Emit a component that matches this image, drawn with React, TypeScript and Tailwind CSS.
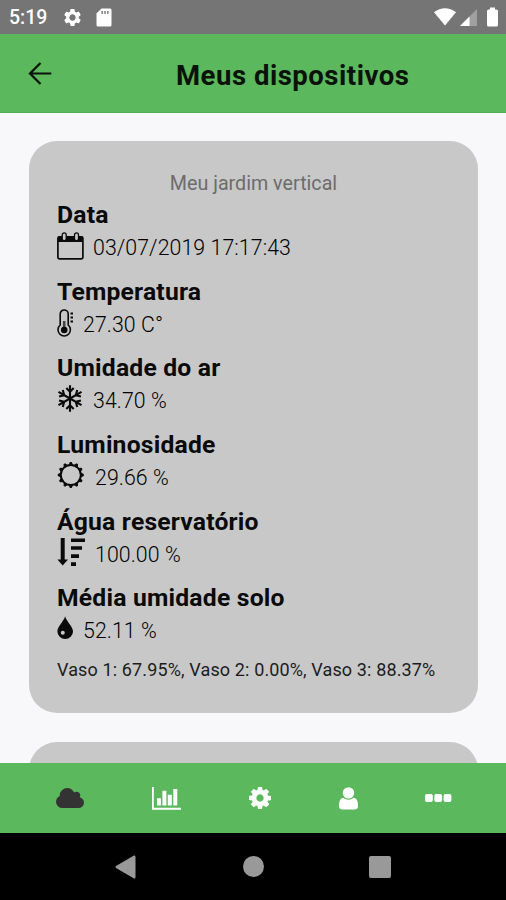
import type { ReactNode } from 'react';
import { MdSettings } from 'react-icons/md';

const CalendarIcon = () => (
  <svg width="27" height="28" viewBox="0 0 27 28" fill="none" stroke="#0a0a0a">
    <rect x="0.9" y="4.800" width="25" height="22" rx="1.500" strokeWidth="1.700" />
    <path d="M1 4.500h25v5.500H1z" fill="#0a0a0a" stroke="none" />
    <rect x="5.200" y="0.900" width="4" height="7.800" rx="2" fill="#c8c8c8" strokeWidth="1.300" />
    <rect x="17.500" y="0.900" width="4" height="7.800" rx="2" fill="#c8c8c8" strokeWidth="1.300" />
  </svg>
);

const ThermometerIcon = () => (
  <svg width="17" height="28" viewBox="0 0 17 28" fill="none" stroke="#0a0a0a">
    <path d="M3.200 16V5a4 4 0 0 1 8 0v11a6.200 6.200 0 1 1-8 0z" strokeWidth="1.600" />
    <path d="M7.200 12v8" strokeWidth="2.600" stroke="#444444" />
    <circle cx="7.200" cy="21" r="3.300" fill="#0a0a0a" stroke="none" />
    <path d="M13.500 4.500h2.500M13.500 8.500h2.500M13.500 12.500h2.500" strokeWidth="1.800" />
  </svg>
);

const arms = [0, 60, 120, 180, 240, 300];

const SnowflakeIcon = () => (
  <svg width="27" height="28" viewBox="0 0 27 28" fill="none" stroke="#0a0a0a" strokeWidth="2.100">
    {arms.map((angle) => (
      <path key={angle} d="M13 13.500V0.200M9.300 3L13 6.800L16.700 3" transform={`rotate(${angle} 13 13.5)`} />
    ))}
  </svg>
);

const teeth = Array.from({ length: 12 }, (_, i) => i * 30);

const SunIcon = () => (
  <svg width="28" height="28" viewBox="0 0 28 28">
    <circle cx="13.800" cy="13" r="10" fill="none" stroke="#0a0a0a" strokeWidth="1.900" />
    {teeth.map((angle) => (
      <path key={angle} d="M11.400 3.200L12.900 0h1.800L16.200 3.200z" fill="#0a0a0a" transform={`rotate(${angle} 13.8 13)`} />
    ))}
  </svg>
);

const SortIcon = () => (
  <svg width="28" height="29" viewBox="0 0 28 29" fill="#0a0a0a">
    <path d="M3.700 0h4V21.500h3.300L5.700 27.500L0.400 21.500h3.300z" />
    <path d="M14 0.500h14v3.600H14zM14 8.200h11v3.600H14zM14 16.300h8v3.600h-8zM14 24.300h5v3.600h-5z" />
  </svg>
);

const DropIcon = () => (
  <svg width="17" height="26" viewBox="0 0 17 26">
    <path d="M8.100 0.300C9.300 5.500 16 10.500 16 15.500A7.800 7.500 0 0 1 0.400 15.500C0.400 10.500 6.900 5.500 8.100 0.300z" fill="#0a0a0a" />
    <circle cx="5.800" cy="16.800" r="2" fill="#c8c8c8" />
  </svg>
);

type ReadingProps = {
  label: string;
  value: string;
  icon: ReactNode;
  gap: string;
};

const Reading = ({ label, value, icon, gap }: ReadingProps) => (
  <div className="h-[76.7px]">
    <h2 className="text-[24.7px] leading-[30px] font-bold tracking-[0.2px] text-[#0a0a0a]">{label}</h2>
    <div className={`flex h-[32px] items-center ${gap}`}>
      {icon}
      <span className="pt-[4px] text-[21.3px] leading-[28px] font-light tracking-[0.08px] whitespace-nowrap text-black">
        {value}
      </span>
    </div>
  </div>
);

const StatusBar = () => (
  <div className="flex h-[34px] shrink-0 items-center bg-[#757575] text-white">
    <span className="ml-[9px] w-[53px] pt-[2px] text-[19.5px] font-medium">5:19</span>
    <MdSettings size={21} />
    <svg className="ml-[13px]" width="16" height="19" viewBox="0 0 16 19">
      <path d="M5.500 0.500H14q1.500 0 1.500 1.500v15q0 1.500-1.500 1.500H2q-1.500 0-1.500-1.500V5.500z" fill="#ffffff" />
      <path d="M6.200 3v3M9 3v3M11.800 3v3" stroke="#8a8a8a" strokeWidth="1.600" />
    </svg>
    <div className="ml-auto flex items-center pr-[8px]">
      <svg width="22" height="18" viewBox="0 0 22 18" fill="currentColor">
        <path d="M0 4.200Q11-3.800 22 4.200L11 17.500z" />
      </svg>
      <svg width="17" height="17" viewBox="0 0 17 17" className="ml-[4px]">
        <path d="M0 17L17 0v17z" fill="#a0a0a0" />
        <path d="M0 17L9.500 7.500V17z" fill="#ffffff" />
      </svg>
      <svg width="11" height="20" viewBox="0 0 11 20" className="ml-[10px]" fill="currentColor">
        <path d="M3 0.500h5V2.500h1.500Q11 2.500 11 4v14q0 1.500-1.500 1.500h-8Q0 19.500 0 18V4q0-1.500 1.500-1.500H3z" />
      </svg>
    </div>
  </div>
);

const TabBar = () => (
  <div className="flex h-[70px] shrink-0 items-center bg-[#5cb85c] text-white">
    <svg className="ml-[56px]" width="28" height="20" viewBox="64 128 1920 1408" preserveAspectRatio="none" fill="#333333">
      <path d="M1984 1152q0 159-112.500 271.500t-271.500 112.500h-1088q-185 0-316.500-131.500t-131.500-316.500q0-132 71-241.500t187-163.500q-2-28-2-43 0-212 150-362t362-150q158 0 286.500 88t187.500 230q70-62 166-62 106 0 181 75t75 181q0 75-41 138 129 30 213 134.500t84 239.500z" />
    </svg>
    <svg className="ml-[68px]" width="29" height="23" viewBox="0 0 29 23" fill="currentColor">
      <path d="M0 0h1.800v20.800H29v1.900H0z" />
      <path d="M5 11.200h4v7.300H5zM10.400 3.700h4v14.800h-4zM15.800 7.700h4v10.800h-4zM21.300 2h4v16.500h-4z" />
    </svg>
    <svg className="ml-[68px]" width="22" height="22" viewBox="128 128 1536 1536" fill="currentColor">
      <path d="M1152 896q0-106-75-181t-181-75-181 75-75 181 75 181 181 75 181-75 75-181zm512-109v222q0 12-8 23t-20 13l-185 28q-19 54-39 91 35 50 107 138 10 12 10 25t-9 23q-27 37-99 108t-94 71q-12 0-26-9l-138-108q-44 23-91 38-16 136-29 186-7 28-36 28h-222q-14 0-24.500-8.500t-11.500-21.500l-28-184q-49-16-90-37l-141 107q-10 9-25 9-14 0-25-11-126-114-165-168-7-10-7-23 0-12 8-23 15-21 51-66.500t54-70.500q-27-50-41-99l-183-27q-13-2-21-12.500t-8-23.500v-222q0-12 8-23t19-13l186-28q14-46 39-92-40-57-107-138-10-12-10-24 0-10 9-23 26-36 98.500-107.500t94.500-71.500q13 0 26 10l138 107q44-23 91-38 16-136 29-186 7-28 36-28h222q14 0 24.500 8.500t11.500 21.500l28 184q49 16 90 37l142-107q9-9 24-9 13 0 25 10 129 119 165 170 7 8 7 22 0 12-8 23-15 21-51 66.500t-54 70.500q26 50 41 98l183 28q13 2 21 12.500t8 23.500z" />
    </svg>
    <svg className="ml-[68px]" width="19" height="23" viewBox="0 0 19 23" fill="currentColor">
      <circle cx="9.500" cy="5.900" r="5.700" />
      <path d="M4.200 10.800Q9.500 14.500 14.800 10.800Q19 11.300 19 19Q19 22.500 15.500 22.500h-12Q0 22.500 0 19Q0 11.300 4.200 10.800z" />
    </svg>
    <svg className="ml-[67px]" width="27" height="8" viewBox="0 0 27 8" fill="currentColor">
      <rect width="7.800" height="8" rx="2" />
      <rect x="9.300" width="7.800" height="8" rx="2" />
      <rect x="18.600" width="7.800" height="8" rx="2" />
    </svg>
  </div>
);

const SystemNav = () => (
  <div className="flex h-[67px] shrink-0 items-center bg-black">
    <svg className="ml-[115px]" width="21" height="24" viewBox="0 0 21 24" fill="#999999">
      <path d="M1 11Q0 12 1 13L19 23.500Q20.500 24 20.500 22V2Q20.500 0 19 0.500z" />
    </svg>
    <div className="ml-[107px] size-[21px] rounded-full bg-[#999999]" />
    <div className="ml-[105px] h-[22px] w-[22px] rounded-[2px] bg-[#999999]" />
  </div>
);

export default function App() {
  return (
    <div className="flex h-[900px] w-[506px] flex-col overflow-hidden bg-[#f8f8fa] font-[Roboto,sans-serif]">
      <StatusBar />
      <header className="flex h-[79px] shrink-0 items-center border-b border-[#50ad50] bg-[#5cb85c]">
        <svg className="ml-[28px]" width="24" height="24" viewBox="0 0 24 24" fill="none" stroke="#0a120a" strokeWidth="2.200">
          <path d="M23.300 12.500H2M12.500 2L2 12.500L12.500 23" />
        </svg>
        <h1 className="ml-[124px] pt-[6px] text-[27.5px] font-bold tracking-[0.52px] whitespace-nowrap text-[#0a120a]">
          Meus dispositivos
        </h1>
      </header>

      <main className="min-h-0 flex-1 overflow-hidden px-[29px] pt-[28px]">
        <section className="h-[572px] w-[449px] rounded-[28px] bg-[#c8c8c8] px-[28px] pt-[30px]">
          <p className="text-center text-[19.7px] leading-[26px] text-[#6c6c6c]">Meu jardim vertical</p>
          <div className="pt-[3px]">
            <Reading label="Data" value="03/07/2019 17:17:43" icon={<CalendarIcon />} gap="gap-[9px]" />
            <Reading label="Temperatura" value="27.30 C°" icon={<ThermometerIcon />} gap="gap-[9px]" />
            <Reading label="Umidade do ar" value="34.70 %" icon={<SnowflakeIcon />} gap="gap-[9px]" />
            <Reading label="Luminosidade" value="29.66 %" icon={<SunIcon />} gap="gap-[10px]" />
            <Reading label="Água reservatório" value="100.00 %" icon={<SortIcon />} gap="gap-[10px]" />
            <Reading label="Média umidade solo" value="52.11 %" icon={<DropIcon />} gap="gap-[9px]" />
          </div>
          <p className="text-[18px] leading-[20px] tracking-[0.13px] whitespace-nowrap text-[#1c1c1c]">
            Vaso 1: 67.95%, Vaso 2: 0.00%, Vaso 3: 88.37%
          </p>
        </section>
        <section className="mt-[29px] h-[572px] w-[449px] rounded-[28px] bg-[#c8c8c8]" />
      </main>

      <TabBar />
      <SystemNav />
    </div>
  );
}
